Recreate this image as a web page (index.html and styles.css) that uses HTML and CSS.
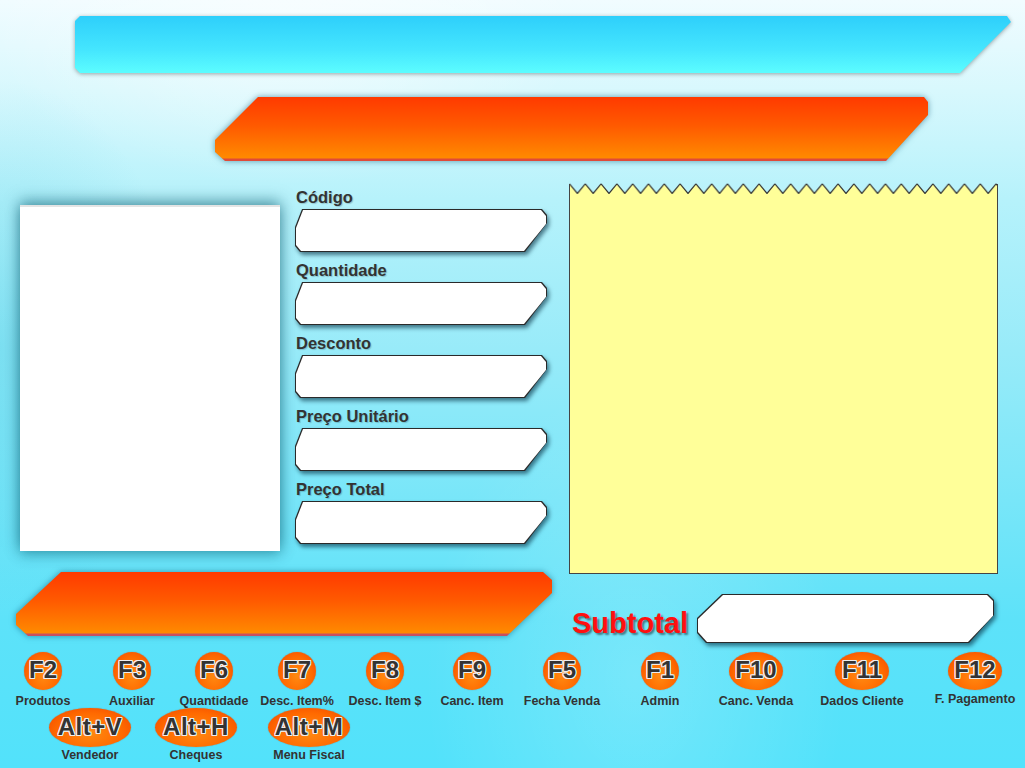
FILE: index.html
```html
<!DOCTYPE html>
<html lang="pt">
<head>
<meta charset="utf-8">
<title>PDV</title>
<link rel="stylesheet" href="styles.css">
</head>
<body>
<div class="screen">
  <div class="top-wrap"><div class="top-bar"></div></div>
  <div class="title-wrap"><div class="title-bar"></div></div>

  <div class="main">
    <div class="left-col">
      <div class="entry">
        <div class="photo"></div>
        <div class="form">
          <div class="group">
            <div class="lbl-field">Código</div>
            <div class="field"><div class="edge"><div class="fill"></div></div></div>
          </div>
          <div class="group">
            <div class="lbl-field">Quantidade</div>
            <div class="field"><div class="edge"><div class="fill"></div></div></div>
          </div>
          <div class="group">
            <div class="lbl-field">Desconto</div>
            <div class="field"><div class="edge"><div class="fill"></div></div></div>
          </div>
          <div class="group">
            <div class="lbl-field">Preço Unitário</div>
            <div class="field"><div class="edge"><div class="fill"></div></div></div>
          </div>
          <div class="group">
            <div class="lbl-field">Preço Total</div>
            <div class="field"><div class="edge"><div class="fill"></div></div></div>
          </div>
        </div>
      </div>
      <div class="desc-wrap"><div class="desc-bar"></div></div>
    </div>

    <div class="right-col">
      <div class="receipt">
        <svg class="zigzag" width="429" height="11" viewBox="0 0 429 11">
          <defs>
            <pattern id="zz" x="0.5" y="0" width="15.8" height="11" patternUnits="userSpaceOnUse">
              <path d="M0 0.8 L7.9 10.5 L15.8 0.8 V11 H0 Z" fill="#ffff99"/>
              <path d="M0 0.8 L7.9 10.5 L15.8 0.8" fill="none" stroke="#333" stroke-width="1.2"/>
            </pattern>
          </defs>
          <rect x="0.5" y="0" width="428" height="11" fill="url(#zz)"/>
          <line x1="0.5" y1="1" x2="0.5" y2="11" stroke="#444" stroke-width="1"/>
          <line x1="428.5" y1="1" x2="428.5" y2="11" stroke="#444" stroke-width="1"/>
        </svg>
        <div class="paper"></div>
      </div>
      <div class="subtotal-row">
        <span class="subtotal-lbl">Subtotal</span>
        <div class="field big"><div class="edge"><div class="fill"></div></div></div>
      </div>
    </div>
  </div>

  <div class="keys">
    <div class="key"><span class="cap">F2</span><span class="lbl">Produtos</span></div>
    <div class="key"><span class="cap">F3</span><span class="lbl">Auxiliar</span></div>
    <div class="key"><span class="cap">F6</span><span class="lbl">Quantidade</span></div>
    <div class="key"><span class="cap">F7</span><span class="lbl">Desc. Item%</span></div>
    <div class="key"><span class="cap">F8</span><span class="lbl">Desc. Item $</span></div>
    <div class="key"><span class="cap">F9</span><span class="lbl">Canc. Item</span></div>
    <div class="key"><span class="cap">F5</span><span class="lbl">Fecha Venda</span></div>
    <div class="key"><span class="cap">F1</span><span class="lbl">Admin</span></div>
    <div class="key"><span class="cap wide">F10</span><span class="lbl">Canc. Venda</span></div>
    <div class="key"><span class="cap wide">F11</span><span class="lbl">Dados Cliente</span></div>
    <div class="key"><span class="cap wide">F12</span><span class="lbl up">F. Pagamento</span></div>
  </div>

  <div class="alt-keys">
    <div class="key k-v"><span class="cap alt">Alt+V</span><span class="lbl">Vendedor</span></div>
    <div class="key k-h"><span class="cap alt">Alt+H</span><span class="lbl">Cheques</span></div>
    <div class="key k-m"><span class="cap alt">Alt+M</span><span class="lbl">Menu Fiscal</span></div>
  </div>
</div>
</body>
</html>
```

FILE: styles.css
```css
html, body {
  margin: 0;
  padding: 0;
  width: 1025px;
  height: 768px;
  overflow: hidden;
}

body {
  font-family: "Liberation Sans", Arial, sans-serif;
  background:
    radial-gradient(ellipse 420px 220px at 28% 4%, rgba(255,255,255,0.55), rgba(255,255,255,0) 70%),
    radial-gradient(ellipse 300px 420px at 62% 88%, rgba(255,255,255,0.18), rgba(255,255,255,0) 70%),
    radial-gradient(ellipse 260px 380px at 0% 45%, rgba(40,190,220,0.25), rgba(40,190,220,0) 70%),
    linear-gradient(180deg, #f1fcff 0px, #d8f8fd 90px, #b6f2fb 200px, #98ebf9 350px, #78e6f9 500px, #5de2f9 620px, #52e2fb 768px);
}

.screen {
  width: 1025px;
  height: 768px;
}

/* top cyan bar */
.top-wrap {
  margin: 16px 0 0 75px;
  width: 936px;
  height: 57px;
  filter: drop-shadow(0 1px 2px rgba(0, 0, 0, 0.35));
}
.top-bar {
  height: 100%;
  background: linear-gradient(180deg, #2ecffb 0%, #45e6fe 60%, #5cfdff 100%);
  clip-path: polygon(5px 0, 932px 0, 936px 6px, 885px 57px, 5px 57px, 0 52px, 0 5px);
}

/* orange title bar */
.title-wrap {
  margin: 24px 0 0 215px;
  width: 713px;
  height: 64px;
  filter: drop-shadow(0 0 3px rgba(0, 80, 110, 0.55));
}
.title-bar {
  height: 100%;
  background: linear-gradient(180deg, #ff3a00 0%, #ff5a00 45%, #ff8a00 calc(100% - 3px), #e04a38 calc(100% - 2px));
  clip-path: polygon(43px 0, 709px 0, 713px 5px, 713px 18px, 671px 64px, 10px 64px, 0 55px, 0 43px);
}

/* main area */
.main {
  display: flex;
  margin-top: 22px;
  height: 460px;
}

.left-col {
  width: 560px;
}

.entry {
  display: flex;
  height: 368px;
}

.photo {
  margin: 22px 0 0 20px;
  width: 260px;
  height: 346px;
  box-sizing: border-box;
  background: #fff;
  border-top: 2px solid #e4e4e4;
  box-shadow: 0 -4px 14px rgba(0, 80, 100, 0.5), 0 4px 12px rgba(0, 90, 110, 0.35);
}

.form {
  margin-left: 15px;
  padding-top: 4px;
  width: 256px;
}

.group + .group {
  margin-top: 8px;
}

.lbl-field {
  height: 20px;
  line-height: 20px;
  margin: 0 0 2px 1px;
  font-size: 16.5px;
  font-weight: bold;
  color: #333;
  text-shadow: 1px 1px 1px rgba(0, 0, 0, 0.18);
}

/* chamfered white fields */
.field {
  width: 252px;
  height: 43px;
  filter: drop-shadow(2px 3px 2px rgba(0, 40, 60, 0.6));
}
.edge {
  height: 100%;
  box-sizing: border-box;
  padding: 1px;
  background: #2a2a2a;
  clip-path: polygon(7px 0, calc(100% - 5px) 0, 100% 6px, 100% 14px, calc(100% - 22px) 100%, 5px 100%, 0 calc(100% - 6px), 0 18px);
}
.fill {
  height: 100%;
  background: #fff;
  clip-path: polygon(7px 0, calc(100% - 5px) 0, 100% 6px, 100% 14px, calc(100% - 22px) 100%, 5px 100%, 0 calc(100% - 6px), 0 18px);
}

.field.big {
  width: 297px;
  height: 49px;
}
.big .edge,
.big .fill {
  clip-path: polygon(25px 0, calc(100% - 6px) 0, 100% 6px, 100% 21px, calc(100% - 25px) 100%, 9px 100%, 0 calc(100% - 10px), 0 24px);
}

/* bottom orange bar */
.desc-wrap {
  margin: 21px 0 0 16px;
  width: 536px;
  height: 64px;
  filter: drop-shadow(0 0 3px rgba(0, 80, 110, 0.55));
}
.desc-bar {
  height: 100%;
  background: linear-gradient(180deg, #ff3a00 0%, #ff5a00 45%, #ff8a00 calc(100% - 3px), #c85060 calc(100% - 2px));
  clip-path: polygon(45px 0, 527px 0, 536px 8px, 536px 21px, 491px 64px, 12px 64px, 0 53px, 0 42px);
}

/* receipt */
.right-col {
  margin-left: 9px;
  width: 429px;
}

.zigzag {
  display: block;
}

.paper {
  height: 380px;
  box-sizing: border-box;
  background: #ffff99;
  border: 1px solid #444;
  border-top: none;
}

.subtotal-row {
  display: flex;
  margin-top: 20px;
  height: 49px;
}

.subtotal-lbl {
  width: 125px;
  margin-left: 3px;
  padding-top: 15px;
  font-size: 29px;
  line-height: 29px;
  font-weight: bold;
  color: #ff1010;
  text-shadow: 2px 2px 2px rgba(0, 0, 0, 0.45);
}

/* function keys */
.keys {
  display: grid;
  grid-template-columns: 86px 92px 72px 94px 82px 92px 88px 108px 84px 128px 98px;
  margin-top: 9px;
}

.key {
  display: flex;
  flex-direction: column;
  align-items: center;
}

.cap {
  display: flex;
  align-items: center;
  justify-content: center;
  width: 38px;
  height: 38px;
  border-radius: 50%;
  background: radial-gradient(ellipse at 50% 62%, #ff8a12 0%, #ff6a00 55%, #f04400 100%);
  box-shadow: 0 0 1px rgba(150, 40, 0, 0.6);
  font-size: 24px;
  line-height: 1;
  font-weight: bold;
  color: #333;
  padding-bottom: 2px;
  box-sizing: border-box;
  text-shadow:
    1px 0 0 #eee, -1px 0 0 #eee, 0 1px 0 #eee, 0 -1px 0 #eee,
    1px 1px 0 #eee, -1px -1px 0 #eee, 1px -1px 0 #eee, -1px 1px 0 #eee;
}

.cap.wide {
  width: 54px;
}

.cap.alt {
  width: 82px;
  height: 39px;
  letter-spacing: 0.5px;
}

.lbl {
  margin-top: 4px;
  font-size: 12.5px;
  line-height: 14px;
  font-weight: bold;
  color: #333;
  white-space: nowrap;
}

.lbl.up {
  margin-top: 2px;
}

.alt-keys {
  display: flex;
  padding-left: 37px;
}

.alt-keys .lbl {
  margin-top: 1px;
}

.k-v, .k-h {
  width: 106px;
}

.k-m {
  width: 120px;
}
```
